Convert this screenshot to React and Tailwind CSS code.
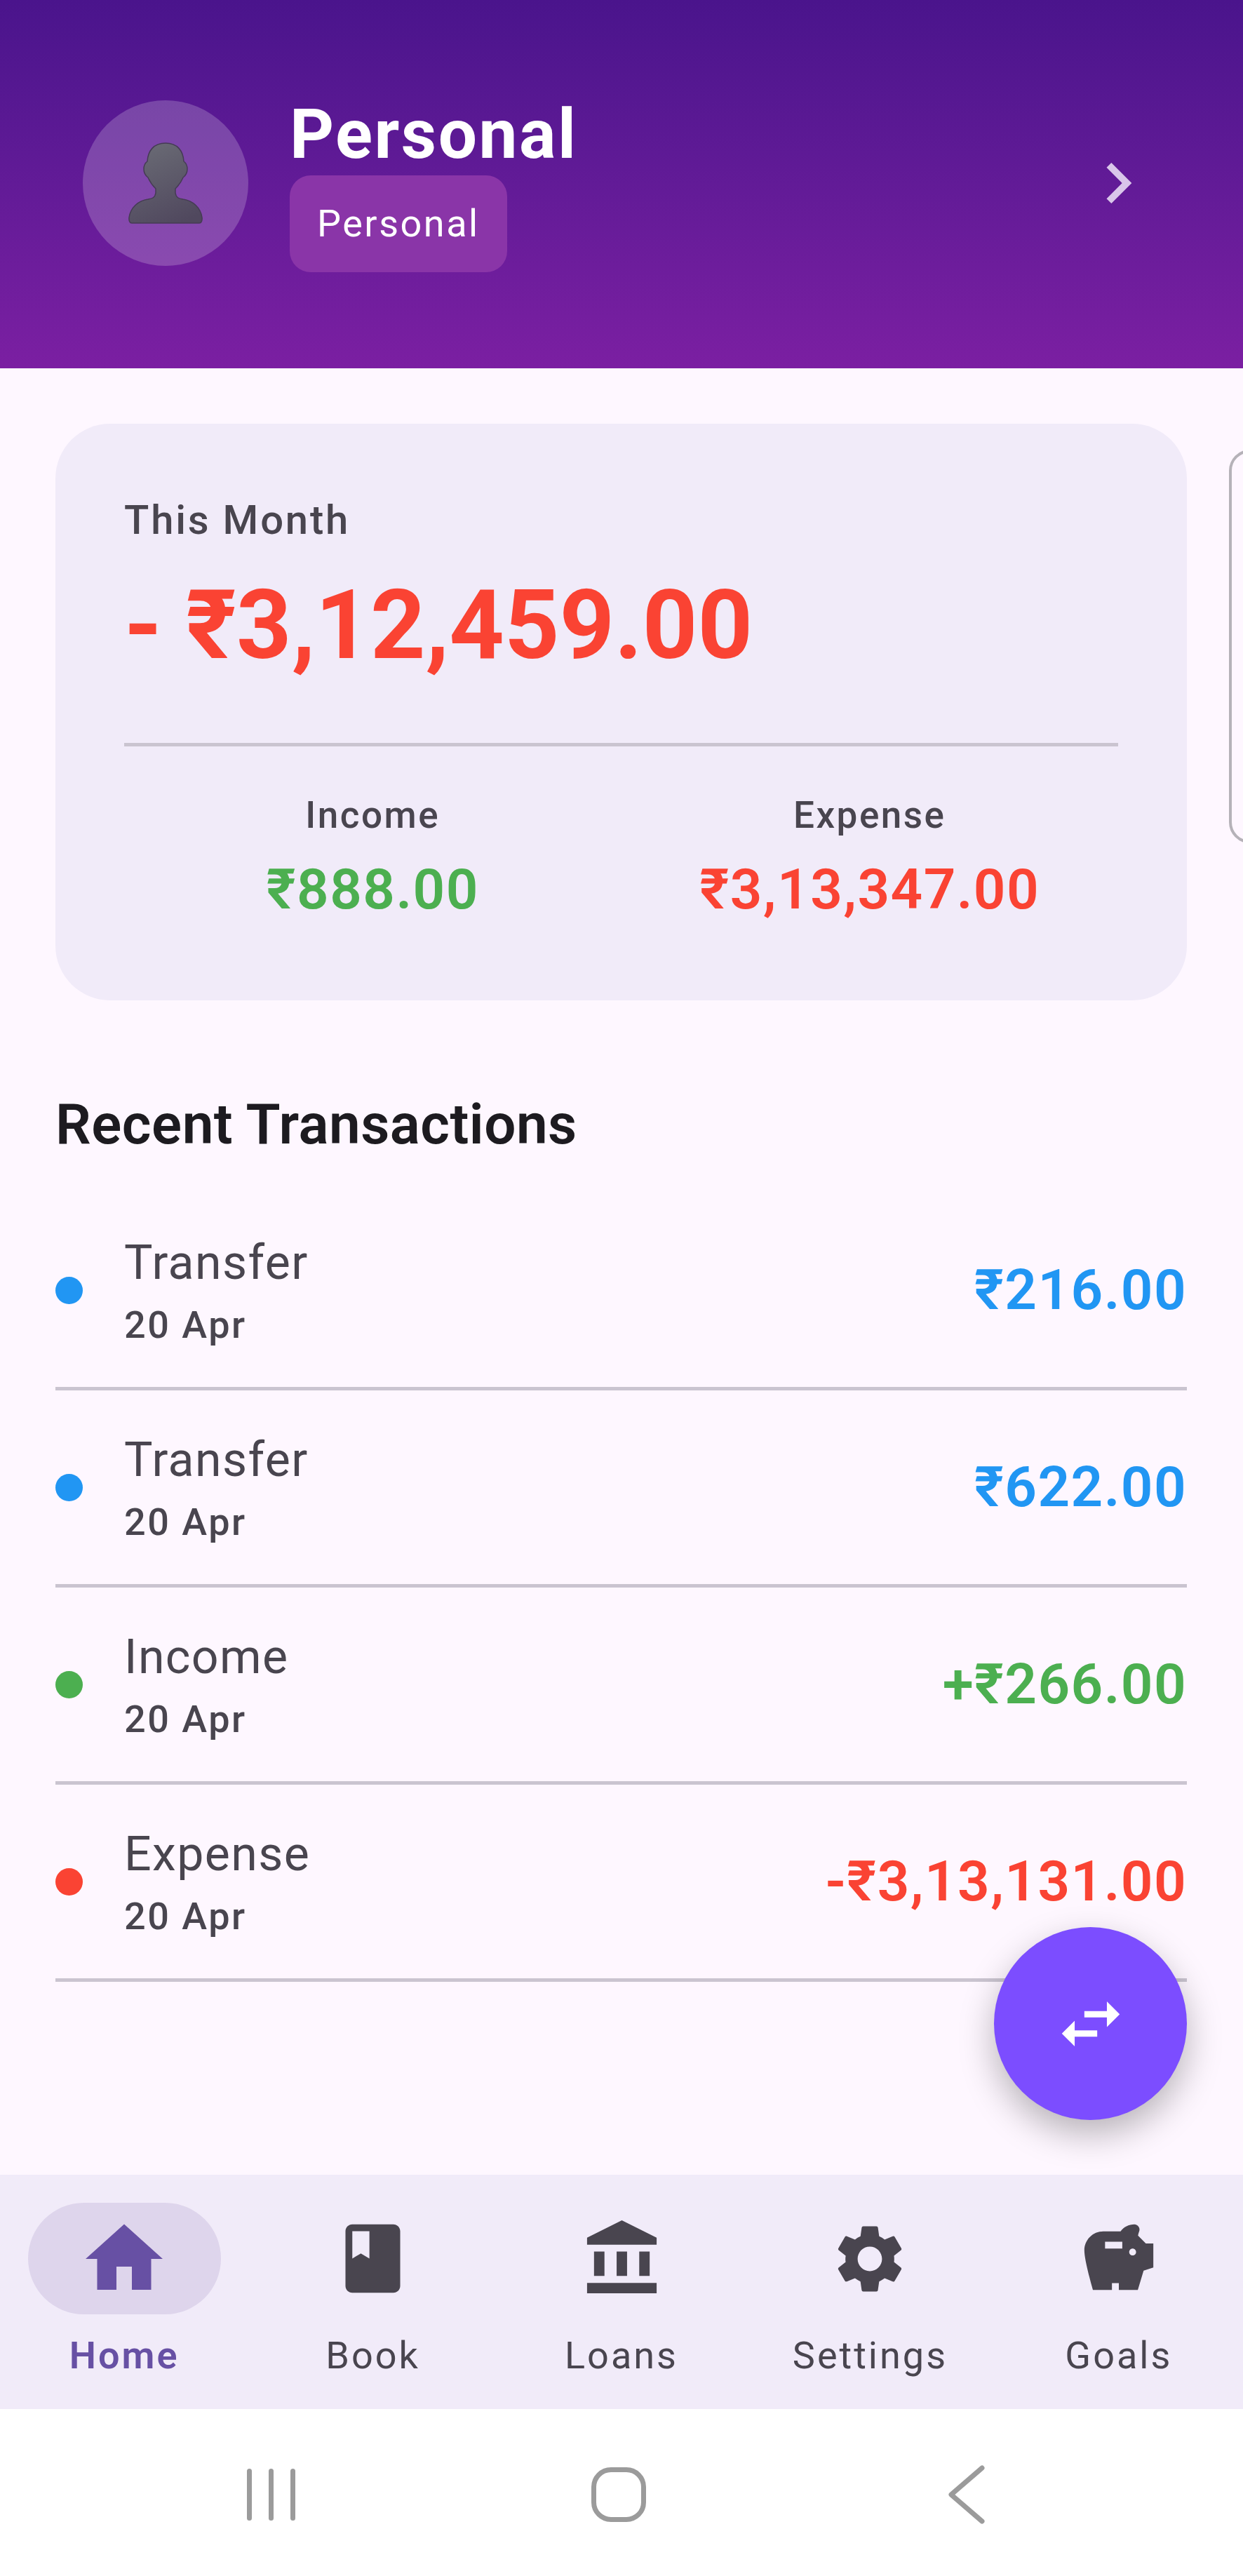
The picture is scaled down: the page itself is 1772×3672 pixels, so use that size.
import { MdHome, MdBook, MdSettings, MdSavings, MdSwapHoriz, MdChevronRight } from 'react-icons/md';

const TRANSACTIONS = [
  { title: 'Transfer', date: '20 Apr', amount: '₹216.00', dot: 'bg-[#2196F3]', text: 'text-[#2196F3]' },
  { title: 'Transfer', date: '20 Apr', amount: '₹622.00', dot: 'bg-[#2196F3]', text: 'text-[#2196F3]' },
  { title: 'Income', date: '20 Apr', amount: '+₹266.00', dot: 'bg-[#4CAF50]', text: 'text-[#4CAF50]' },
  { title: 'Expense', date: '20 Apr', amount: '-₹3,13,131.00', dot: 'bg-[#FA4333]', text: 'text-[#FA4333]' },
];

// account_balance in the older outline has wider pillars, so draw this one
function BankIcon({ size, color }) {
  return (
    <svg width={size} height={size} viewBox="0 0 24 24" fill={color}>
      <path d="M4 10h3v7H4zM10.500 10h3v7h-3zM2 19h20v3H2zM17 10h3v7h-3zM12 1 2 6v2h20V6z" />
    </svg>
  );
}

const NAV = [
  { label: 'Home', Icon: MdHome, size: 132, active: true },
  { label: 'Book', Icon: MdBook, size: 117 },
  { label: 'Loans', Icon: BankIcon, size: 119 },
  { label: 'Settings', Icon: MdSettings, size: 116 },
  { label: 'Goals', Icon: MdSavings, size: 118 },
];

function PersonEmoji() {
  return (
    <svg width="106" height="116" viewBox="0 0 106 116">
      <defs>
        <linearGradient id="bust" x1="0.3" y1="0" x2="0.7" y2="1">
          <stop offset="0" stopColor="#696a74" />
          <stop offset="1" stopColor="#50485e" />
        </linearGradient>
      </defs>
      <path
        d="M53 1C36 1 28 12 27 27c-4 3-5 6-5 11s2 9 6 12c3 7 7 12 11 16v6c-1 7-5 8-11 9C14 83 3 93 1 107c-.5 5 1 8 4 8h96c3 0 4.500-3 4-8-2-14-13-24-27-26-6-1-10-2-11-9v-6c4-4 8-9 11-16 4-3 6-7 6-12s-1-8-5-11C78 12 70 1 53 1z"
        fill="url(#bust)"
        stroke="#453b54"
        strokeWidth="1.5"
      />
    </svg>
  );
}

function Stat({ label, value, color }) {
  return (
    <div className="flex flex-col items-center">
      <span className="h-[74px] text-[53px] leading-[74px] font-medium tracking-[2.5px] text-[#49454F]">{label}</span>
      <span className={'mt-[19px] text-[80px] leading-[100px] font-semibold tracking-[1.4px] ' + color}>{value}</span>
    </div>
  );
}

function TransactionRow({ title, date, amount, dot, text }) {
  return (
    <div className="flex h-[281px] items-center border-b-[5px] border-[#CAC4D0]">
      <span className={'h-[39px] w-[39px] rounded-full ' + dot} />
      <div className="ml-[59px] flex flex-1 flex-col">
        <span className="text-[68px] leading-[90px] tracking-[1.4px] text-[#49454F]">{title}</span>
        <span className="mt-[9px] text-[54px] leading-[70px] font-medium tracking-[2.5px] text-[#49454F]">{date}</span>
      </div>
      <span className={'text-[80px] leading-[100px] font-semibold tracking-[1.4px] ' + text}>{amount}</span>
    </div>
  );
}

function NavItem({ label, Icon, size, active }) {
  return (
    <div className="flex flex-1 flex-col items-center">
      <div className={'flex h-[159px] w-[275px] items-center justify-center rounded-[80px] ' + (active ? 'bg-[#DED5EC]' : '')}>
        <Icon size={size} color={active ? '#6750A4' : '#49454F'} />
      </div>
      <span
        className={
          'mt-[24px] text-[54px] leading-[70px] tracking-[3px] ' +
          (active ? 'font-semibold text-[#6750A4]' : 'text-[#49454F]')
        }
      >
        {label}
      </span>
    </div>
  );
}

export default function App() {
  return (
    <div className="flex h-[3672px] w-[1772px] flex-col overflow-hidden bg-white font-['Roboto',sans-serif]">
      {/* Account header */}
      <header className="flex h-[525px] shrink-0 items-center bg-gradient-to-b from-[#4A148C] to-[#7B1FA2] pb-[4px] pl-[118px] pr-[120px]">
        <div className="flex h-[236px] w-[236px] items-center justify-center rounded-full bg-white/20">
          <PersonEmoji />
        </div>
        <div className="ml-[59px] flex flex-1 flex-col items-start">
          <span className="text-[98px] leading-[116px] font-bold tracking-[2.5px] text-white">Personal</span>
          <span className="flex h-[138px] items-center rounded-[30px] bg-[#8A35A8] px-[39px] text-[54px] tracking-[2.5px] text-white">
            Personal
          </span>
        </div>
        <MdChevronRight size={116} color="#D9C6EA" />
      </header>

      <main className="relative flex min-h-0 flex-1 flex-col bg-[#FEF7FF]">
        {/* Summary carousel */}
        <div className="mt-[79px] flex items-start overflow-hidden pl-[79px]">
          <section className="h-[822px] w-[1613px] shrink-0 rounded-[78px] bg-[#F1EBF9] px-[98px] pt-[100px]">
            <div className="text-[58px] leading-[74px] font-medium tracking-[2.8px] text-[#49454F]">This Month</div>
            <div className="mt-[31px] text-[137px] leading-[164px] font-bold text-[#FA4333]">- ₹3,12,459.00</div>
            <div className="mt-[86px] h-[5px] bg-[#CAC4D0]" />
            <div className="mt-[61px] grid grid-cols-2">
              <Stat label="Income" value="₹888.00" color="text-[#4CAF50]" />
              <Stat label="Expense" value="₹3,13,347.00" color="text-[#FA4333]" />
            </div>
          </section>
          <div className="ml-[60px] mt-[37px] h-[561px] w-[200px] shrink-0 rounded-[30px] border-[4px] border-[#B5B2B8]" />
        </div>

        {/* Recent transactions */}
        <section className="mt-[124px] pl-[79px] pr-[80px]">
          <h2 className="text-[80px] leading-[106px] font-semibold tracking-[0.5px] text-[#1D1B20]">Recent Transactions</h2>
          <div className="mt-[45px]">
            {TRANSACTIONS.map((row, i) => (
              <TransactionRow key={i} {...row} />
            ))}
          </div>
        </section>

        <button className="absolute bottom-[78px] right-[80px] flex h-[275px] w-[275px] items-center justify-center rounded-full bg-[#7C4DFF] shadow-[0_20px_50px_rgba(0,0,0,0.28)]">
          <MdSwapHoriz size={110} color="white" />
        </button>
      </main>

      {/* Bottom navigation */}
      <nav className="flex h-[334px] shrink-0 bg-[#F1EBF9] pt-[40px]">
        {NAV.map((item) => (
          <NavItem key={item.label} {...item} />
        ))}
      </nav>

      {/* Android system bar */}
      <div className="grid h-[238px] shrink-0 grid-cols-[496px_496px_496px] items-center pl-[138px] pt-[6px]">
        <div className="flex justify-center gap-[24px]">
          <span className="h-[74px] w-[7px] rounded-full bg-[#9B9B9B]" />
          <span className="h-[74px] w-[7px] rounded-full bg-[#9B9B9B]" />
          <span className="h-[74px] w-[7px] rounded-full bg-[#9B9B9B]" />
        </div>
        <div className="flex justify-center">
          <span className="h-[78px] w-[78px] rounded-[28px] border-[7px] border-[#9B9B9B]" />
        </div>
        <div className="flex justify-center">
          <svg width="54" height="84" viewBox="0 0 54 84" fill="none">
            <path d="M49 4 5 42l44 38" stroke="#9B9B9B" strokeWidth="7" strokeLinecap="round" strokeLinejoin="round" />
          </svg>
        </div>
      </div>
    </div>
  );
}
